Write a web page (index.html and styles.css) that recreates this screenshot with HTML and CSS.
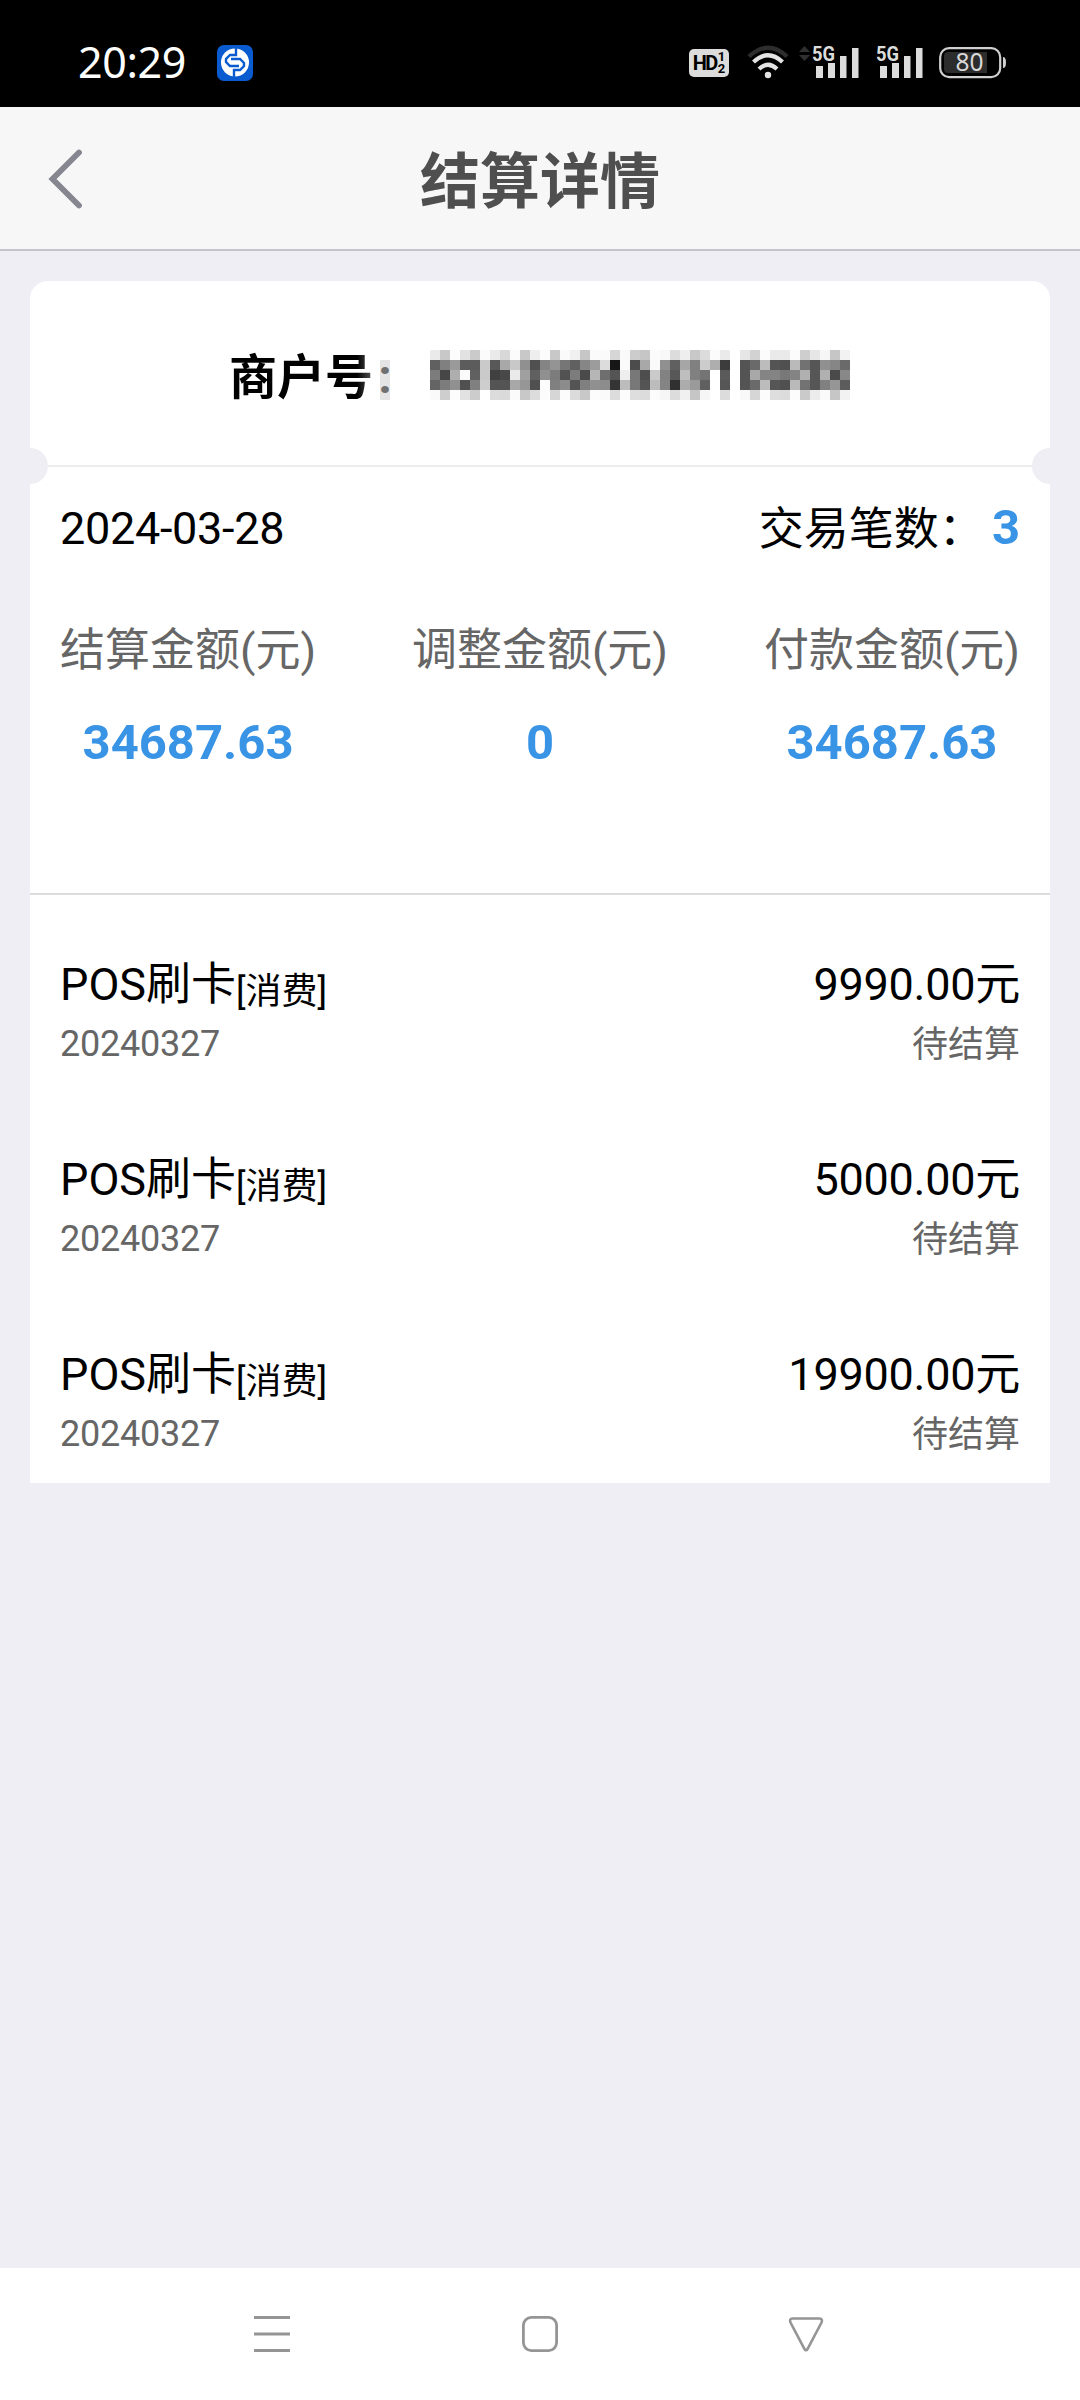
FILE: index.html
```html
<!DOCTYPE html>
<html lang="zh-CN">
<head>
    <meta charset="UTF-8">
    <meta name="viewport" content="width=device-width, initial-scale=1.0">
    <title>结算详情</title>
    <link rel="stylesheet" href="styles.css">
</head>
<body>
    <!-- Status Bar -->
    <div class="status-bar">
        <span class="time">20:29</span>
        <svg class="app-icon" width="36" height="36" viewBox="0 0 36 36">
            <rect width="36" height="36" rx="7" fill="#0a5bd0"/>
            <circle cx="18" cy="17.5" r="14" fill="#fff"/>
            <path d="M19 3v7h-6l-4 4v3l4 4h9M17 32v-7h6l4-4v-3l-4-4h-9" fill="none" stroke="#0a5bd0" stroke-width="2.4"/>
        </svg>
        <div class="status-icons">
            <div class="hd">
                <span class="hd-text">HD</span>
                <span class="hd-sims"><i>1</i><i>2</i></span>
            </div>
            <svg class="wifi" width="42" height="34" viewBox="0 0 42 34">
                <g fill="none" stroke-width="4.2">
                    <path d="M2 11.500Q21 -6 40 11.500" stroke="#2e2e2e"/>
                    <path d="M6.500 17Q21 3.500 35.500 17" stroke="#e4e4e4"/>
                    <path d="M12 24Q21 15.500 30 24" stroke="#e4e4e4"/>
                </g>
                <circle cx="21" cy="30" r="3.200" fill="#e4e4e4"/>
            </svg>
            <svg class="signal" width="61" height="34" viewBox="0 0 61 34">
                <path d="M0 7l5.500-6 5.500 6zM0 10l5.500 6 5.500-6z" fill="#303030"/>
                <text x="13" y="16" font-size="21" font-weight="700" fill="#dcdcdc" textLength="23" lengthAdjust="spacingAndGlyphs">5G</text>
                <path d="M17 21h7v12h-7zM29 18h7v15h-7zM41 11h6.500v22h-6.500zM53 3h6.500v30h-6.500z" fill="#dcdcdc"/>
            </svg>
            <svg class="signal-2" width="48" height="34" viewBox="0 0 48 34">
                <text x="0" y="16" font-size="21" font-weight="700" fill="#dcdcdc" textLength="23" lengthAdjust="spacingAndGlyphs">5G</text>
                <path d="M4 21h7v12h-7zM16 18h7v15h-7zM28 11h6.500v22h-6.500zM40 3h6.500v30h-6.500z" fill="#dcdcdc"/>
            </svg>
            <svg class="battery" width="68" height="32" viewBox="0 0 68 32">
                <rect x="1.200" y="1.200" width="60" height="29" rx="9" fill="none" stroke="#d0d0d0" stroke-width="2.200"/>
                <path d="M9 5h39v21H9q-4 0-4-4V9q0-4 4-4z" fill="#2c2c2c"/>
                <path d="M64 10q3 0 3 5.500t-3 5.500z" fill="#d0d0d0"/>
                <text class="level" x="16.500" y="24" font-size="24.500" fill="#d8d8d8">80</text>
            </svg>
        </div>
    </div>

    <!-- Page Header -->
    <header class="header">
        <svg class="back" width="34" height="60" viewBox="0 0 34 60">
            <path d="M31 4.500L4.500 31L31 57.500" fill="none" stroke="#85868f" stroke-width="5.800" stroke-linecap="round"/>
        </svg>
        <h1>结算详情</h1>
    </header>

    <!-- Settlement Card -->
    <main class="card">
        <div class="merchant">
            <span class="merchant-label">商户号</span>
            <span class="merchant-colon">:</span>
            <svg class="mask" id="mask" width="420" height="50" shape-rendering="crispEdges"></svg>
        </div>

        <section class="summary">
            <div class="summary-top">
                <span class="date">2024-03-28</span>
                <span class="count">交易笔数：<b>3</b></span>
            </div>
            <div class="totals">
                <div class="total"><span>结算金额(元)</span><b>34687.63</b></div>
                <div class="total"><span>调整金额(元)</span><b>0</b></div>
                <div class="total"><span>付款金额(元)</span><b>34687.63</b></div>
            </div>
        </section>

        <ul class="list">
            <li>
                <div class="line"><span>POS刷卡<small>[消费]</small></span><span class="amount">9990.00元</span></div>
                <div class="sub"><span>20240327</span><span class="state">待结算</span></div>
            </li>
            <li>
                <div class="line"><span>POS刷卡<small>[消费]</small></span><span class="amount">5000.00元</span></div>
                <div class="sub"><span>20240327</span><span class="state">待结算</span></div>
            </li>
            <li>
                <div class="line"><span>POS刷卡<small>[消费]</small></span><span class="amount">19900.00元</span></div>
                <div class="sub"><span>20240327</span><span class="state">待结算</span></div>
            </li>
        </ul>
    </main>

    <!-- Navigation Bar -->
    <nav class="nav-bar">
        <svg width="36" height="36" viewBox="0 0 36 36">
            <path d="M0 1.500h36M0 18h36M0 34.500h36" stroke="#959595" stroke-width="3"/>
        </svg>
        <svg width="36" height="36" viewBox="0 0 36 36">
            <rect x="2.400" y="1.400" width="33.200" height="33.200" rx="8" fill="none" stroke="#959595" stroke-width="2.800"/>
        </svg>
        <svg width="36" height="36" viewBox="0 0 36 36">
            <path d="M4.500 2.500h27q3.500 0 2 4L19.500 33q-1.500 2.500-3 0L2.500 6.500q-1.500-4 2-4z" fill="none" stroke="#959595" stroke-width="2.600"/>
        </svg>
    </nav>

    <script>
        // grey level of each 10px block, two hex digits per block
        const maskRows = [
            "eac8fce2cafbead8fbc8eefcc8faf0c6fbfad6faccc6fbf8dceec8dcfbeaffe6d2fceaeafccee6f6c6f2",
            "60809a5c5cca58a8c8905084947660869cdc16fa4ca8fa9060a680ccae3cff546abc5450ba725690866a",
            "7c46aefa60ca4048eaa060907c527c4ab66e54ee784eca8258be8074ff5aff54a884847884b056b04a88",
            "647c905080ce5454a89650fc808c5480908c34bc7854bc8430ac9a60ff56ff546abc5650ba725680965c",
            "facefce2ccffdcdafbc8dcfcd6fcdcc8fcfadcfcdedcfcf6dcf0c6f6ffdcfff8d6fcdedcfccaecfac6f2"
        ];
        const mask = document.getElementById("mask");

        maskRows.forEach((row, y) => {
            row.match(/../g).forEach((level, x) => {
                const block = document.createElementNS("http://www.w3.org/2000/svg", "rect");
                block.setAttribute("x", x * 10);
                block.setAttribute("y", y * 10);
                block.setAttribute("width", 10);
                block.setAttribute("height", 10);
                block.setAttribute("fill", "#" + level + level + level);
                mask.appendChild(block);
            });
        });
    </script>
</body>
</html>
```
FILE: styles.css
```css
/* General Styling */
* {
    box-sizing: border-box;
    margin: 0;
    padding: 0;
}

body {
    display: flex;
    flex-direction: column;
    width: 1080px;
    height: 2400px;
    background-color: #efeef4;
    color: #000;
    font-family: Roboto, "Noto Sans CJK SC", sans-serif;
    font-size: 45px;
}

svg {
    display: block;
    flex: none;
    overflow: visible;
}

/* Status Bar */
.status-bar {
    display: flex;
    align-items: flex-start;
    height: 107px;
    padding: 45px 73px 0 78px;
    background-color: #000;
}

.time {
    width: 139px;
    color: #fff;
    font-family: "Noto Sans", sans-serif;
    font-size: 43px;
    letter-spacing: -0.4px;
    line-height: 34px;
}

.status-icons {
    display: flex;
    margin-left: auto;
}

.hd {
    display: flex;
    justify-content: center;
    gap: 1px;
    width: 40px;
    height: 28px;
    margin: 4px 18px 0 0;
    background-color: #dcdcdc;
    border-radius: 5px;
    font-weight: 700;
}

.hd-text {
    font-size: 20px;
    letter-spacing: -1.5px;
    line-height: 28px;
}

.hd-sims {
    display: flex;
    flex-direction: column;
    padding-top: 2px;
    font-size: 13px;
    line-height: 12px;
}

.hd-sims i {
    font-style: normal;
}

.signal {
    margin: 0 16px 0 10px;
}

.battery {
    margin: 2px 0 0 15px;
}

.level {
    font-family: "Noto Sans", sans-serif;
}

/* Page Header */
.header {
    display: grid;
    grid-template-columns: 1fr auto 1fr;
    align-items: center;
    height: 144px;
    padding: 0 48px;
    background-color: #f7f7f7;
    border-bottom: 2px solid #c5c4cc;
}

.header h1 {
    padding-top: 10px;
    color: #4f4f4f;
    font-size: 60px;
    line-height: 80px;
}

/* Settlement Card */
.card {
    margin: 30px 30px auto;
    height: 1202px;
    background-color: #fff;
    border-radius: 18px 18px 0 0;
}

.merchant {
    position: relative;
    display: flex;
    height: 186px;
    padding: 69px 0 0 199px;
    border-bottom: 2px solid #ededf0;
    font-size: 48px;
    line-height: 50px;
}

.merchant-label {
    width: 151px;
    padding-top: 3px;
    font-weight: 700;
    background: linear-gradient(90deg, #000 128px, #666 146px);
    background-clip: text;
    color: transparent;
}

.merchant-colon {
    display: flex;
    justify-content: center;
    width: 10px;
    height: 40px;
    margin: 10px 40px 0 0;
    background-color: #e4e4e4;
    color: #707070;
    font-weight: 700;
    line-height: 34px;
}

/* ticket notches */
.merchant::before,
.merchant::after {
    content: "";
    position: absolute;
    bottom: -19px;
    width: 36px;
    height: 36px;
    border-radius: 50%;
    background-color: #efeef4;
}

.merchant::before {
    left: -18px;
}

.merchant::after {
    right: -18px;
}

.summary {
    height: 428px;
    padding: 32px 30px 0;
    border-bottom: 2px solid #dcdcdc;
}

.summary-top,
.totals,
.line,
.sub {
    display: flex;
    justify-content: space-between;
}

.summary-top {
    line-height: 60px;
}

.summary b {
    color: #3a94e6;
    font-size: 49px;
}

.date {
    letter-spacing: -0.3px;
}

.count {
    padding-top: 1px;
}

.count b {
    margin-left: 8px;
    vertical-align: 1px;
    line-height: 1;
}

.totals {
    margin-top: 61px;
    color: #666;
}

.total {
    display: flex;
    flex-direction: column;
    align-items: center;
    line-height: 60px;
}

.total b {
    margin-top: 32px;
}

/* Transactions */
.list {
    list-style: none;
    padding-top: 60px;
}

.list li {
    height: 195px;
    padding: 0 30px;
}

.line {
    line-height: 60px;
}

.line small {
    font-size: 36px;
    line-height: 1;
    vertical-align: -4px;
}

.amount {
    letter-spacing: -0.25px;
}

.sub {
    margin-top: 2px;
    color: #666;
    font-size: 36px;
    letter-spacing: -0.25px;
    line-height: 54px;
}

.state {
    padding-top: 1px;
    letter-spacing: 0;
}

/* Navigation Bar */
.nav-bar {
    display: flex;
    justify-content: space-between;
    height: 132px;
    padding: 48px 256px 0 254px;
    background-color: #fff;
}
```
